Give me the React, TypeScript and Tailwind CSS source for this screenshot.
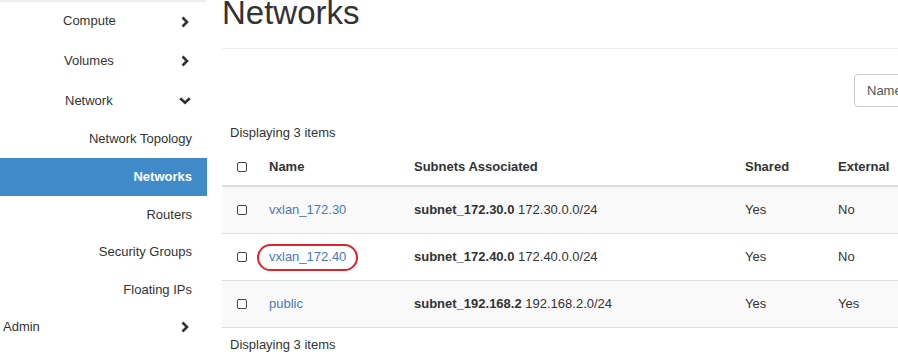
import React from 'react';

const font = { fontFamily: '"Liberation Sans", Arial, sans-serif' };

function ChevronRight() {
  return (
    <svg width="8" height="12" viewBox="0 0 8 12" className="shrink-0">
      <polyline points="1.5,1.5 6,6 1.5,10.5" fill="none" stroke="#333" strokeWidth="2.6" />
    </svg>
  );
}

function ChevronDown() {
  return (
    <svg width="12" height="8" viewBox="0 0 12 8" className="shrink-0">
      <polyline points="1.2,1.2 6,5.8 10.8,1.2" fill="none" stroke="#333" strokeWidth="2.6" />
    </svg>
  );
}

function Checkbox() {
  return <span className="block w-[10px] h-[10px] border border-[#444] rounded-[2px] bg-white" />;
}

const rows = [
  { name: 'vxlan_172.30', subnet: 'subnet_172.30.0', cidr: '172.30.0.0/24', shared: 'Yes', external: 'No', marked: false },
  { name: 'vxlan_172.40', subnet: 'subnet_172.40.0', cidr: '172.40.0.0/24', shared: 'Yes', external: 'No', marked: true },
  { name: 'public', subnet: 'subnet_192.168.2', cidr: '192.168.2.0/24', shared: 'Yes', external: 'Yes', marked: false },
];

const cols = 'grid grid-cols-[39px_145px_331px_93px_1fr] items-center';

export default function App() {
  return (
    <div className="flex w-[898px] h-[355px] overflow-hidden bg-white text-[13px] text-[#333]" style={font}>
      {/* sidebar */}
      <div className="w-[207px] shrink-0 flex flex-col">
        <div className="h-[41px] border-t-2 border-[#f1eded] flex items-center justify-between pl-[63px] pr-[18px]">
          <span className="-mt-[1px]">Compute</span>
          <ChevronRight />
        </div>
        <div className="h-[40px] flex items-center justify-between pl-[64px] pr-[18px]">
          <span>Volumes</span>
          <ChevronRight />
        </div>
        <div className="h-[39px] flex items-center justify-between pl-[65px] pr-[16px]">
          <span>Network</span>
          <ChevronDown />
        </div>
        <div className="h-[38px] flex items-center justify-end pr-[15px]">Network Topology</div>
        <div className="h-[38px] flex items-center justify-end pr-[15px] bg-[#3f8ac8] text-white font-bold">Networks</div>
        <div className="h-[37px] flex items-center justify-end pr-[15px]">Routers</div>
        <div className="h-[38px] flex items-center justify-end pr-[15px]">Security Groups</div>
        <div className="h-[37px] flex items-center justify-end pr-[15px]">Floating IPs</div>
        <div className="h-[38px] flex items-center justify-between pl-[3px] pr-[18px]">
          <span>Admin</span>
          <ChevronRight />
        </div>
      </div>

      {/* main */}
      <div className="flex-1 min-w-0 pl-[15px] overflow-hidden">
        <div className="w-[1000px]">
          <div className="-mt-[4px] pb-[19px] border-b border-[#eee]">
            <h1 className="text-[33px] leading-[33px] font-normal">Networks</h1>
          </div>

          <div className="mt-[25px] ml-[632px] h-[33px] w-[200px] border border-[#ccc] rounded-[4px] flex items-center pl-[12px] text-[#555]">
            Name
          </div>

          <div className="mt-[17px] leading-[18px] pl-[8px]">Displaying 3 items</div>

          <div className="mt-[7px] w-[900px]">
            <div className={`${cols} h-[38px] border-b-2 border-[#ddd] font-bold`}>
              <div className="pl-[15px]"><Checkbox /></div>
              <div className="pl-[8px]">Name</div>
              <div className="pl-[8px]">Subnets Associated</div>
              <div className="pl-[8px]">Shared</div>
              <div className="pl-[8px]">External</div>
            </div>
            {rows.map((r, i) => (
              <div key={r.name} className={`${cols} h-[47px] border-b border-[#ddd] ${i % 2 === 0 ? 'bg-[#f9f9f9]' : 'bg-white'}`}>
                <div className="pl-[15px]"><Checkbox /></div>
                <div className="pl-[8px]">
                  <span className="relative inline-block text-[#4a7ab5] leading-[18px]">
                    {r.name}
                    {r.marked && (
                      <span className="absolute -left-[12px] -right-[12px] -top-[4px] -bottom-[5px] border-2 border-[#e0232b] rounded-[14px]" />
                    )}
                  </span>
                </div>
                <div className="pl-[8px]">
                  <span className="font-bold">{r.subnet}</span> {r.cidr}
                </div>
                <div className="pl-[8px]">{r.shared}</div>
                <div className="pl-[8px]">{r.external}</div>
              </div>
            ))}
          </div>

          <div className="mt-[8px] leading-[18px] pl-[8px]">Displaying 3 items</div>
        </div>
      </div>
    </div>
  );
}
